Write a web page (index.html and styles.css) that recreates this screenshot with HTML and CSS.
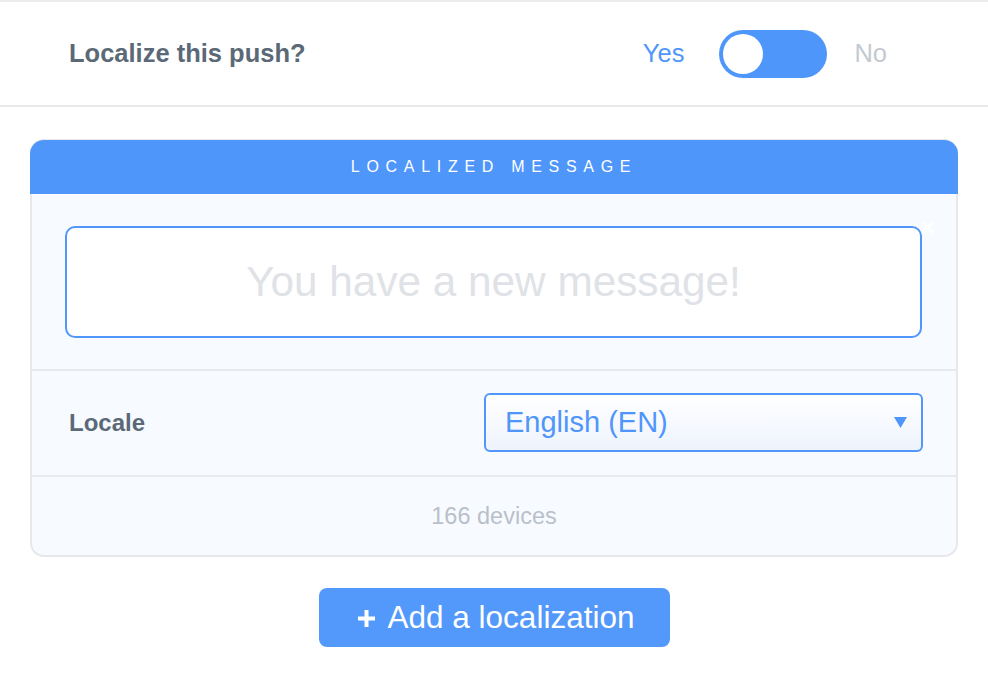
FILE: index.html
```html
<!DOCTYPE html>
<html lang="en">
<head>
<meta charset="utf-8">
<title>Localize push</title>
<link rel="stylesheet" href="styles.css">
</head>
<body>
<div class="topbar">
  <div class="title">Localize this push?</div>
  <div class="switch-group">
    <span class="opt opt-yes">Yes</span>
    <span class="toggle"><span class="knob"></span></span>
    <span class="opt opt-no">No</span>
  </div>
</div>

<div class="card">
  <div class="card-head">LOCALIZED MESSAGE</div>
  <div class="section msg-section">
    <div class="msgbox">
      <span class="placeholder">You have a new message!</span>
      <span class="close">×</span>
    </div>
  </div>
  <div class="section locale-row">
    <span class="label">Locale</span>
    <div class="select">
      <span class="select-text">English (EN)</span>
      <svg class="caret" width="13" height="11" viewBox="0 0 13 11"><path d="M0 0H13L6.5 11Z" fill="#4f96fb"/></svg>
    </div>
  </div>
  <div class="section devices">166 devices</div>
</div>

<div class="actions">
  <button class="add-btn">
    <svg class="plus" width="19" height="19" viewBox="0 0 19 19"><path d="M9.5 1V18M1 9.5H18" stroke="#ffffff" stroke-width="4"/></svg>
    <span>Add a localization</span>
  </button>
</div>
</body>
</html>
```

FILE: styles.css
```css
* { box-sizing: border-box; }
body {
  margin: 0;
  background: #ffffff;
  font-family: "Liberation Sans", Arial, sans-serif;
}
.topbar {
  height: 107px;
  border-top: 2px solid #ececec;
  border-bottom: 2px solid #e8e8e8;
  display: flex;
  align-items: center;
  justify-content: space-between;
  padding: 0 101px 0 69px;
}
.title {
  font-size: 25.5px;
  font-weight: bold;
  color: #5b6977;
}
.switch-group {
  display: flex;
  align-items: center;
}
.opt {
  font-size: 25.5px;
}
.opt-yes { color: #4f96fb; margin-right: 35px; }
.opt-no { color: #c3c9cf; margin-left: 27px; }
.toggle {
  width: 108px;
  height: 48px;
  border-radius: 24px;
  background: #4f96fb;
  display: flex;
  align-items: center;
  padding: 0 4px;
}
.knob {
  width: 40px;
  height: 40px;
  border-radius: 50%;
  background: #ffffff;
}
.card {
  margin: 32px 30px 0;
  border: 2px solid #e6e8eb;
  border-radius: 14px;
  background: #f7fbff;
}
.card-head {
  margin: -1px -2px 0;
  height: 54px;
  border-radius: 14px 14px 0 0;
  background: #4f96fb;
  color: #ffffff;
  font-size: 16px;
  letter-spacing: 6.7px;
  display: flex;
  align-items: center;
  justify-content: center;
}
.section + .section {
  border-top: 2px solid #e6e9ed;
}
.msg-section {
  padding: 32px 34px 31px 33px;
}
.msgbox {
  position: relative;
  height: 112px;
  border: 2px solid #5197fb;
  border-radius: 10px;
  background: #ffffff;
  display: flex;
  align-items: center;
  justify-content: center;
}
.placeholder {
  font-size: 42.3px;
  color: #dfe2e6;
}
.close {
  position: absolute;
  top: -14px;
  right: -15px;
  font-size: 26px;
  font-weight: bold;
  color: #ffffff;
  line-height: 1;
}
.locale-row {
  display: flex;
  align-items: center;
  justify-content: space-between;
  padding: 22px 33px 23px 37px;
}
.label {
  font-size: 24px;
  font-weight: bold;
  color: #5b6977;
}
.select {
  width: 439px;
  height: 59px;
  border: 2px solid #5197fb;
  border-radius: 6px;
  background: linear-gradient(#ffffff, #eef3fc);
  display: flex;
  align-items: center;
  justify-content: space-between;
  padding: 0 14px 0 19px;
}
.select-text {
  font-size: 29px;
  color: #4f96fb;
}
.devices {
  height: 80px;
  display: flex;
  align-items: center;
  justify-content: center;
  font-size: 23.5px;
  color: #b9c0ca;
}
.actions {
  display: flex;
  justify-content: center;
  margin-top: 31px;
}
.add-btn {
  width: 351px;
  height: 59px;
  border: none;
  border-radius: 8px;
  background: #5299fb;
  color: #ffffff;
  font-family: "Liberation Sans", Arial, sans-serif;
  font-size: 31.5px;
  padding: 0 0 0 2px;
  margin-left: 1px;
  display: flex;
  align-items: center;
  justify-content: center;
  gap: 12px;
}
.plus {
  flex: none;
  margin-top: 2px;
}
```
